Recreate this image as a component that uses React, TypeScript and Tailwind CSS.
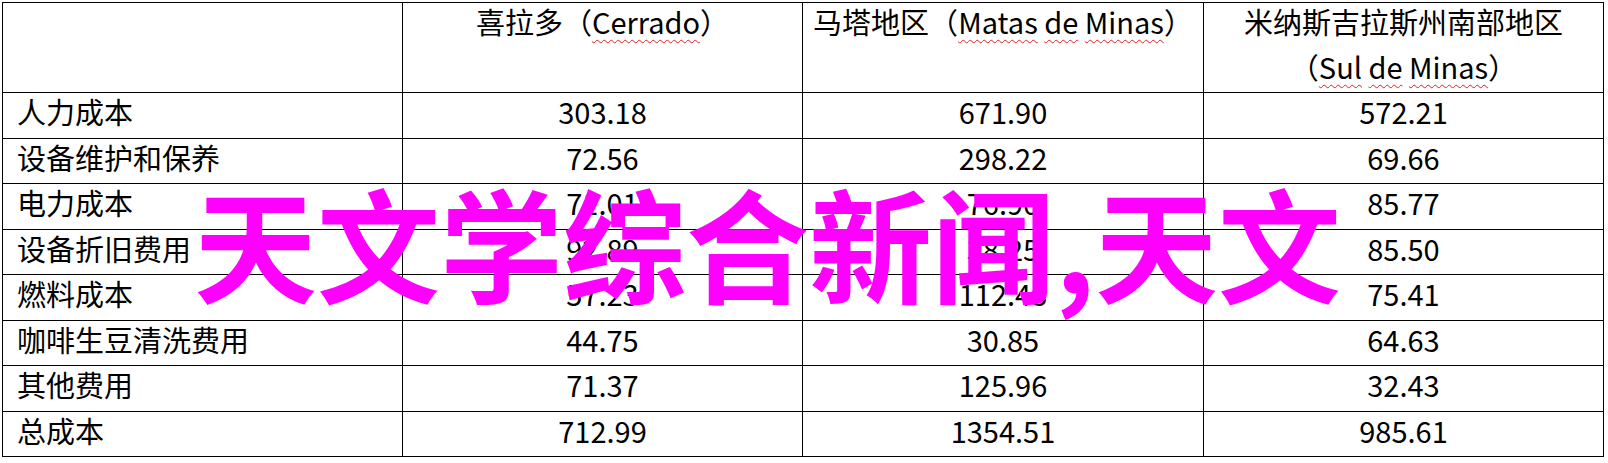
const rows = [
  ["人力成本", "303.18", "671.90", "572.21"],
  ["设备维护和保养", "72.56", "298.22", "69.66"],
  ["电力成本", "71.01", "76.90", "85.77"],
  ["设备折旧费用", "92.89", "38.25", "85.50"],
  ["燃料成本", "57.23", "112.43", "75.41"],
  ["咖啡生豆清洗费用", "44.75", "30.85", "64.63"],
  ["其他费用", "71.37", "125.96", "32.43"],
  ["总成本", "712.99", "1354.51", "985.61"],
];

// spellcheck squiggle under latin words
const Sq = ({ children }: { children: string }) => (
  <span className="underline decoration-wavy decoration-[#e02020] decoration-1 underline-offset-[5px]">
    {children}
  </span>
);

const App = () => {
  return (
    <div className="relative w-[1608px] h-[463px] bg-white overflow-hidden font-['Noto_Sans_CJK_SC',sans-serif] text-black">
      {/* TABLE */}
      <div className="pt-[2px] pl-[2px]">
        <div className="grid grid-cols-[399px_399px_400px_399px] grid-rows-[89px_repeat(8,44.5px)] gap-px p-px bg-black w-[1602px] text-[29px]">
          <div className="bg-white" />
          <div className="bg-white text-center leading-[43px]">
            <div className="-mt-[3px]">
              喜拉多（<Sq>Cerrado</Sq>）
            </div>
          </div>
          <div className="bg-white text-center leading-[43px]">
            <div className="-mt-[3px]">
              马塔地区（<Sq>Matas</Sq> <Sq>de</Sq> <Sq>Minas</Sq>）
            </div>
          </div>
          <div className="bg-white text-center leading-[43px]">
            <div className="-mt-[3px]">
              <div>米纳斯吉拉斯州南部地区</div>
              <div className="mt-[2px]">
                （<Sq>Sul</Sq> <Sq>de</Sq> <Sq>Minas</Sq>）
              </div>
            </div>
          </div>

          {rows.map((r) => (
            <>
              <div key={r[0]} className="bg-white flex items-center pl-[14px] pb-[7px]">
                {r[0]}
              </div>
              <div className="bg-white flex items-center justify-center pb-[7px]">{r[1]}</div>
              <div className="bg-white flex items-center justify-center pb-[7px]">{r[2]}</div>
              <div className="bg-white flex items-center justify-center pb-[7px]">{r[3]}</div>
            </>
          ))}
        </div>
      </div>

      {/* WATERMARK */}
      <div className="absolute left-[194px] top-[179px] text-[123px] leading-none font-bold text-[#ff00ff] whitespace-nowrap">
        天文学综合新闻,天文
      </div>
    </div>
  );
};

export default App;
